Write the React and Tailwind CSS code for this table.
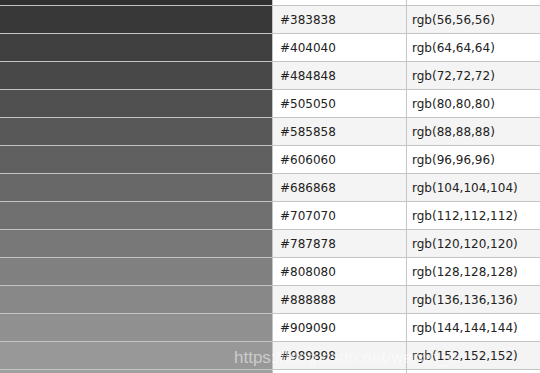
const shades = [48, 56, 64, 72, 80, 88, 96, 104, 112, 120, 128, 136, 144, 152, 160];

const toHex = (n) => n.toString(16).toUpperCase().padStart(2, "0");

export default function App() {
    return (
        <div className="relative h-[373px] w-[540px] overflow-hidden bg-white font-['DejaVu_Sans',Verdana,sans-serif] text-[12px] text-[#222]">
            <div className="mt-[-22px] flex flex-col">
                {shades.map((n, i) => {
                    const hex = `#${toHex(n)}${toHex(n)}${toHex(n)}`;
                    return (
                        <div
                            key={n}
                            className={`grid h-[28px] grid-cols-[272px_134px_1fr] border-b border-[#c4c4c4] ${i % 2 === 1 ? "bg-[#f4f4f4]" : "bg-white"}`}
                        >
                            <div style={{ backgroundColor: hex }} />
                            <div className="flex items-center border-l border-[#c4c4c4] pl-[7px]">{hex}</div>
                            <div className="flex items-center border-l border-[#c4c4c4] pl-[5px]">
                                rgb({n},{n},{n})
                            </div>
                        </div>
                    );
                })}
            </div>
            <div className="pointer-events-none absolute left-[234px] top-[345px] font-['Liberation_Sans',Arial,sans-serif] text-[17px] text-white/50">
                https://blog.csdn.net/weixin_ai
            </div>
        </div>
    );
}
